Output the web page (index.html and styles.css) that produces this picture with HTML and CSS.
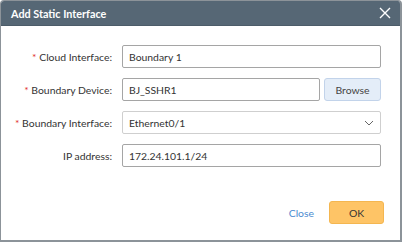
FILE: index.html
```html
<!DOCTYPE html>
<html>
<head>
<meta charset="utf-8">
<link rel="stylesheet" href="styles.css">
</head>
<body>
<div class="dialog">
  <div class="header">
    <span class="title">Add Static Interface</span>
    <svg class="close-x" width="12" height="12" viewBox="0 0 12 12"><path d="M1 1L11 11M11 1L1 11" stroke="#fff" stroke-width="1.4" fill="none"/></svg>
  </div>
  <div class="form">
    <label class="label"><span class="req">*</span> Cloud Interface:</label>
    <div class="field"><div class="input">Boundary 1</div></div>

    <label class="label"><span class="req">*</span> Boundary Device:</label>
    <div class="field"><div class="input grow">BJ_SSHR1</div><div class="btn-browse">Browse</div></div>

    <label class="label"><span class="req">*</span> Boundary Interface:</label>
    <div class="field"><div class="input select">Ethernet0/1<svg class="chev" width="10" height="6" viewBox="0 0 10 6"><path d="M1 1L5 5L9 1" stroke="#666" stroke-width="1" fill="none"/></svg></div></div>

    <label class="label">IP address:</label>
    <div class="field"><div class="input">172.24.101.1/24</div></div>
  </div>
  <div class="footer">
    <span class="link-close">Close</span>
    <div class="btn-ok">OK</div>
  </div>
</div>
</body>
</html>
```
FILE: styles.css
```css
html, body { margin: 0; padding: 0; background: #fff; }
body { font-family: "Lato", "Open Sans", sans-serif; font-size: 10.4px; color: #333; }
.dialog {
  width: 402px; height: 242px; box-sizing: border-box;
  border: 1px solid #8c9399; border-right-width: 2px; border-bottom-width: 2px;
  border-radius: 4px 4px 0 0; overflow: hidden; display: flex; flex-direction: column;
}
.header {
  height: 24px; background: #566775; border-bottom: 1px solid #4c5c69;
  display: flex; align-items: center; justify-content: space-between;
  padding: 0 9px 0 10px; flex: none;
}
.title { color: #fff; font-size: 10.8px; font-weight: 700; }
.close-x { display: block; }
.form {
  display: grid; grid-template-columns: 111px 259px; column-gap: 10px; row-gap: 10px;
  padding-top: 19px; align-items: center;
}
.label { text-align: right; white-space: nowrap; }
.req { color: #e2332f; }
.field { display: flex; gap: 4px; }
.input {
  height: 23px; box-sizing: border-box; border: 1px solid #a5a5a5; border-radius: 2px;
  padding: 0 6px; display: flex; align-items: center; flex: 1; background: #fff;
}
.input.select { border-color: #cfcfcf; justify-content: space-between; padding-right: 6px; }
.btn-browse {
  width: 57px; height: 23px; box-sizing: border-box; border: 1px solid #c2d3ea; border-radius: 3px;
  background: #e4edf8; display: flex; align-items: center; justify-content: center; color: #444;
}
.footer {
  display: flex; justify-content: flex-end; align-items: center; gap: 15px;
  padding: 34px 16px 0 0;
}
.link-close { color: #4a8ad0; }
.btn-ok {
  width: 55px; height: 23px; box-sizing: border-box; background: #fec466; border: 1px solid #f4b650;
  border-radius: 3px; display: flex; align-items: center; justify-content: center; color: #333;
}
```
